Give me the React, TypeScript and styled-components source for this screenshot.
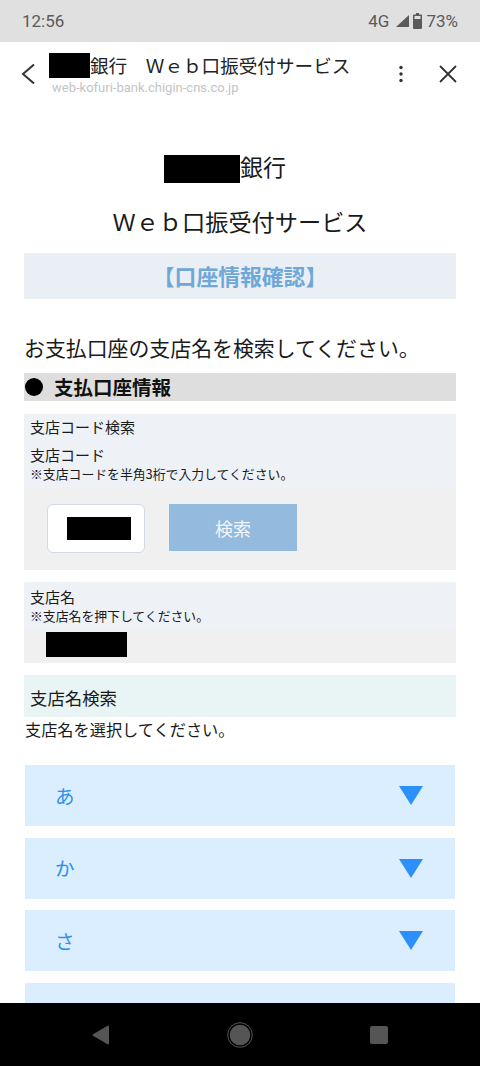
import React from "react";
import styled, { createGlobalStyle } from "styled-components";

const GlobalStyle = createGlobalStyle`
  html, body {
    margin: 0;
    padding: 0;
    background: #fff;
  }
  body {
    font-family: "Noto Sans CJK JP", "Noto Sans", sans-serif;
  }
  * {
    box-sizing: border-box;
  }
`;

// the fourth row is cut by the nav bar before its label shows
const kana = ["あ", "か", "さ", ""];

export default function App() {
  return (
    <Screen>
      <GlobalStyle />
      <StatusBar>
        <span>12:56</span>
        <StatusRight>
          <span>4G</span>
          <SignalIcon width="15" height="14" viewBox="0 0 15 14">
            <path d="M14 1v12H1z" fill="#5a5a5a" />
          </SignalIcon>
          <svg width="9" height="16" viewBox="0 0 9 16">
            <path
              d="M3 0h3v1.500h2a1 1 0 0 1 1 1V15a1 1 0 0 1-1 1H1a1 1 0 0 1-1-1V2.500a1 1 0 0 1 1-1h2z"
              fill="#5a5a5a"
            />
            <path d="M1.500 3h6v3h-6z" fill="#e0e0e0" />
          </svg>
          <span>73%</span>
        </StatusRight>
      </StatusBar>

      <Toolbar>
        <IconSlot>
          <svg width="16" height="22" viewBox="0 0 16 22">
            <path d="M14 1.500 3 11l11 9.500" fill="none" stroke="#333" strokeWidth="2" />
          </svg>
        </IconSlot>
        <TitleBlock>
          <TitleLine>
            <Redacted $w={41} $h={25} />
            <span>銀行　Ｗｅｂ口振受付サービス</span>
          </TitleLine>
          <Url>web-kofuri-bank.chigin-cns.co.jp</Url>
        </TitleBlock>
        <ToolbarActions>
          <svg width="4" height="18" viewBox="0 0 4 18">
            <circle cx="2" cy="2.500" r="1.700" fill="#333" />
            <circle cx="2" cy="9" r="1.700" fill="#333" />
            <circle cx="2" cy="15.500" r="1.700" fill="#333" />
          </svg>
          <svg width="18" height="18" viewBox="0 0 18 18">
            <path d="M1 1l16 16M17 1 1 17" fill="none" stroke="#333" strokeWidth="1.800" />
          </svg>
        </ToolbarActions>
      </Toolbar>

      <Content>
        <BankName>
          <Redacted $w={76} $h={28} />
          <BankSuffix>銀行</BankSuffix>
        </BankName>
        <ServiceName>Ｗｅｂ口振受付サービス</ServiceName>
        <PageBand>【口座情報確認】</PageBand>
        <Lead>お支払口座の支店名を検索してください。</Lead>
        <SectionHead>
          <Bullet />
          支払口座情報
        </SectionHead>

        <Panel>
          <PanelLabels>
            <PanelTitle>支店コード検索</PanelTitle>
            <FieldName>支店コード</FieldName>
            <Note>※支店コードを半角3桁で入力してください。</Note>
          </PanelLabels>
          <SearchRow>
            <CodeInput>
              <Redacted $w={64} $h={23} />
            </CodeInput>
            <SearchButton>検索</SearchButton>
          </SearchRow>
        </Panel>

        <BranchPanel>
          <BranchLabels>
            <FieldName>支店名</FieldName>
            <Note>※支店名を押下してください。</Note>
          </BranchLabels>
          <BranchResult>
            <Redacted $w={81} $h={25} />
          </BranchResult>
        </BranchPanel>

        <SearchBand>支店名検索</SearchBand>
        <SelectText>支店名を選択してください。</SelectText>

        <KanaList>
          {kana.map((k, i) => (
            <KanaRow key={i}>
              <KanaLabel>{k}</KanaLabel>
              <svg width="24" height="19" viewBox="0 0 24 19">
                <path d="M0 0h24L12 19z" fill="#2b90fb" />
              </svg>
            </KanaRow>
          ))}
        </KanaList>
      </Content>

      <NavBar>
        <svg width="18" height="20" viewBox="0 0 18 20">
          <path d="M17 1.500v17a1 1 0 0 1-1.500.8L1 10.800a1 1 0 0 1 0-1.600L15.500.7A1 1 0 0 1 17 1.500z" fill="#555" />
        </svg>
        <svg width="26" height="26" viewBox="0 0 26 26">
          <circle cx="13" cy="13" r="12.300" fill="none" stroke="#555" strokeWidth="1" />
          <circle cx="13" cy="13" r="10.300" fill="#555" />
        </svg>
        <svg width="18" height="18" viewBox="0 0 18 18">
          <rect width="18" height="18" rx="2" fill="#555" />
        </svg>
      </NavBar>
    </Screen>
  );
}

const Screen = styled.div`
  width: 480px;
  height: 1066px;
  display: flex;
  flex-direction: column;
  overflow: hidden;
  background: #fff;
  color: #1a1a1a;
`;

const StatusBar = styled.div`
  height: 42px;
  flex: none;
  display: flex;
  align-items: center;
  justify-content: space-between;
  padding: 0 22px 0 22px;
  background: #e0e0e0;
  font-family: Roboto, sans-serif;
  font-size: 17px;
  color: #5a5a5a;
`;

const StatusRight = styled.div`
  display: flex;
  align-items: center;
  gap: 4px;
`;

const SignalIcon = styled.svg`
  margin-left: 2px;
  margin-right: -1px;
`;

const Toolbar = styled.header`
  height: 64px;
  flex: none;
  display: flex;
  align-items: flex-start;
  background: #fff;
`;

const IconSlot = styled.div`
  width: 49px;
  padding: 21px 0 0 20px;
  flex: none;
`;

const TitleBlock = styled.div`
  width: 340px;
  flex: none;
  padding-top: 10px;
`;

const TitleLine = styled.div`
  display: flex;
  align-items: center;
  height: 26px;
  font-size: 18.6px;
  line-height: 26px;
  white-space: nowrap;
  color: #222;
`;

const Url = styled.div`
  padding: 2px 0 0 3px;
  font-family: Roboto, sans-serif;
  font-size: 13px;
  line-height: 16px;
  color: #c4c4c4;
`;

const ToolbarActions = styled.div`
  display: flex;
  align-items: center;
  gap: 36px;
  padding: 23px 0 0 10px;
`;

const Redacted = styled.div<{ $w: number; $h: number }>`
  width: ${(p) => p.$w}px;
  height: ${(p) => p.$h}px;
  flex: none;
  background: #000;
`;

const Content = styled.main`
  flex: 1;
  min-height: 0;
  overflow: hidden;
  padding: 0 24px;
`;

const BankName = styled.div`
  margin-top: 49px;
  height: 27px;
  display: flex;
  justify-content: center;
  align-items: center;
  padding-right: 30px;
  font-size: 23px;
  line-height: 27px;
`;

const BankSuffix = styled.span`
  margin-top: -4px;
`;

const ServiceName = styled.div`
  margin-top: 24px;
  height: 31px;
  text-align: center;
  font-size: 23.2px;
  line-height: 30px;
  white-space: nowrap;
`;

const PageBand = styled.h1`
  margin: 16px 0 0;
  height: 46px;
  background: #e9eff5;
  text-align: center;
  font-size: 21.8px;
  font-weight: 700;
  line-height: 46px;
  color: #6fa8d8;
`;

const Lead = styled.p`
  margin: 34px 0 0;
  height: 40px;
  font-size: 20.9px;
  line-height: 28px;
  white-space: nowrap;
`;

const SectionHead = styled.h2`
  margin: 0;
  height: 28px;
  display: flex;
  align-items: center;
  gap: 11px;
  padding-left: 1px;
  background: #dedede;
  font-size: 19.5px;
  font-weight: 700;
  line-height: 28px;
  color: #111;
`;

const Bullet = styled.span`
  width: 18px;
  height: 18px;
  border-radius: 50%;
  background: #000;
`;

const Panel = styled.section`
  margin-top: 13px;
  height: 156px;
  background: #f0f0f0;
`;

const PanelLabels = styled.div`
  height: 74px;
  padding: 3px 6px 0;
  background: #eef1f5;
`;

const PanelTitle = styled.div`
  font-size: 15px;
  line-height: 20px;
  margin-bottom: 8px;
`;

const FieldName = styled.div`
  font-size: 15px;
  line-height: 20px;
`;

const Note = styled.div`
  font-size: 12.85px;
  line-height: 17px;
  white-space: nowrap;
`;

const SearchRow = styled.div`
  display: flex;
  align-items: flex-start;
  gap: 24px;
  padding: 16px 0 0 23px;
`;

const CodeInput = styled.div`
  width: 98px;
  height: 49px;
  display: flex;
  align-items: center;
  padding-left: 18.500px;
  background: #fff;
  border: 1.5px solid #d3dae4;
  border-radius: 6px;
`;

const SearchButton = styled.button`
  width: 128px;
  height: 47px;
  padding: 0;
  border: 0;
  background: #94bbdd;
  color: #f2f6fa;
  font-family: inherit;
  font-size: 18px;
`;

const BranchPanel = styled.section`
  margin-top: 12px;
  height: 81px;
  background: #f0f0f0;
`;

const BranchLabels = styled.div`
  height: 48px;
  padding: 5px 6px 0;
  background: #eef1f5;
`;

const BranchResult = styled.div`
  padding: 2px 0 0 22px;
`;

const SearchBand = styled.div`
  margin-top: 12px;
  height: 42px;
  padding: 11px 0 0 6px;
  background: #e9f5f5;
  font-size: 17.4px;
  line-height: 24px;
`;

const SelectText = styled.p`
  margin: 0;
  padding: 2px 0 0 1px;
  height: 48px;
  font-size: 16.2px;
  line-height: 21px;
`;

const KanaList = styled.div`
  display: flex;
  flex-direction: column;
  gap: 11.700px;
  padding: 0 1px;
`;

const KanaRow = styled.div`
  height: 61px;
  flex: none;
  display: flex;
  align-items: center;
  justify-content: space-between;
  padding: 0 32px 0 30px;
  background: #dbeeff;
`;

const KanaLabel = styled.span`
  font-size: 19.5px;
  line-height: 24px;
  color: #2f8fee;
`;

const NavBar = styled.nav`
  height: 63px;
  flex: none;
  display: flex;
  align-items: center;
  justify-content: space-between;
  padding: 0 92px;
  background: #000;
`;
